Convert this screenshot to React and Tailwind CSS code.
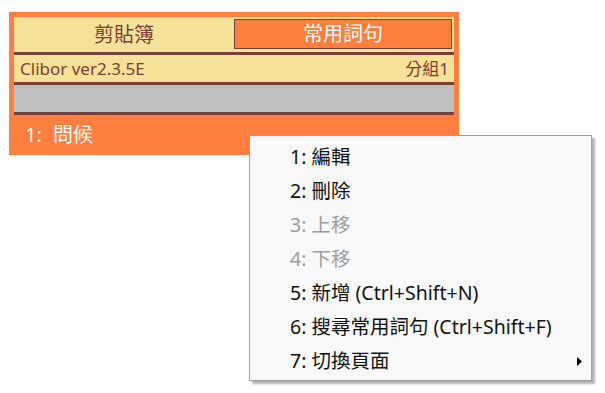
import React from 'react';

const items = [
  { label: '1: 編輯' },
  { label: '2: 刪除' },
  { label: '3: 上移', disabled: true },
  { label: '4: 下移', disabled: true },
  { label: '5: 新增 (Ctrl+Shift+N)' },
  { label: '6: 搜尋常用詞句 (Ctrl+Shift+F)' },
  { label: '7: 切換頁面', sub: true },
];

export default function App() {
  return (
    <div className="relative w-[605px] h-[393px] bg-white overflow-hidden font-['Noto_Sans','Noto_Sans_CJK_TC',sans-serif]">
      {/* Clibor window */}
      <div className="absolute left-[9px] top-[12px] w-[450px] h-[143px] bg-[#ff7f3f] px-[5px] pt-[5px]">
        <div className="flex h-[38px] bg-[#f5e197] border-b-[3px] border-[#7b3f3a]">
          <div className="w-[220px] flex items-center justify-center text-[20px] text-[#7b3f3a] leading-none">
            剪貼簿
          </div>
          <div className="flex-1 mt-[2px] mb-[3px] mr-[2px] border border-[#7b3f3a] bg-[#ff7f3f] flex items-center justify-center text-[20px] text-white leading-none">
            常用詞句
          </div>
        </div>
        <div className="flex h-[30px] items-center justify-between pl-[6px] pr-[5px] bg-[#f5e197] border-b-[3px] border-[#7b3f3a] text-[17px] text-[#7b3f3a] leading-none">
          <span>Clibor ver2.3.5E</span>
          <span>分組1</span>
        </div>
        <div className="h-[30px] bg-[#bfbfbf] border-b-[3px] border-[#7b3f3a]"></div>
        <div className="flex items-center h-[40px] pl-[11px] text-[20px] text-white leading-none">
          <span className="w-[28px]">1:</span>
          <span>問候</span>
        </div>
      </div>

      {/* Context menu */}
      <div className="absolute left-[249px] top-[135px] w-[343px] bg-[#f9f9f9] border border-[#a0a0a0] pt-[4px] pb-[2px] shadow-[3px_3px_2px_rgba(0,0,0,0.3)]">
        {items.map((it) => (
          <div
            key={it.label}
            className={`relative flex items-center h-[34px] pl-[40px] text-[19.5px] leading-none ${
              it.disabled ? 'text-[#9d9d9d]' : 'text-[#111]'
            }`}
          >
            {it.label}
            {it.sub && (
              <svg className="absolute right-[9px] top-[13px]" width="5" height="9" viewBox="0 0 5 9">
                <path d="M0 0 L5 4.5 L0 9 Z" fill="#000" />
              </svg>
            )}
          </div>
        ))}
      </div>
    </div>
  );
}
